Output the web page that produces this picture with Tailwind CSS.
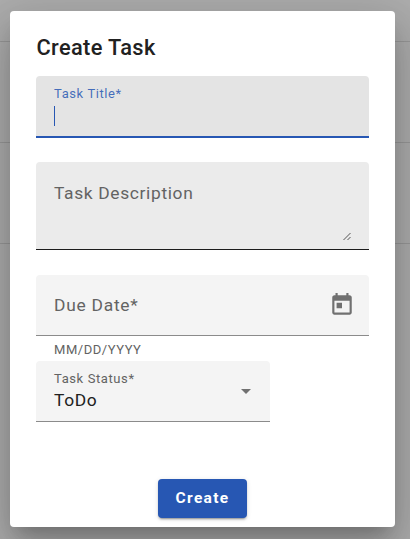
<!DOCTYPE html>
<html lang="en">
<head>
<meta charset="utf-8">
<title>Create Task</title>
<script src="https://cdn.jsdelivr.net/npm/@tailwindcss/browser@4"></script>
</head>
<body class="relative h-[539px] w-[410px] overflow-hidden bg-[#adadad] font-['Roboto',sans-serif] text-[#212121]">
<!-- Page rows behind the dialog -->
<div class="flex flex-col">
  <div class="h-[42px] border-b border-[#989898]"></div>
  <div class="h-[101px] border-b border-[#989898]"></div>
  <div class="h-[101px] border-b border-[#989898]"></div>
</div>
<main class="absolute top-[11px] left-[10px] flex h-[516px] w-[385px] flex-col rounded-[4px] bg-white px-[26px] pt-[21px] pb-[9px] shadow-[0_12px_16px_-8px_rgba(0,0,0,0.2),0_26px_41px_3px_rgba(0,0,0,0.14),0_10px_50px_9px_rgba(0,0,0,0.12)]">
  <h1 class="h-[44px] pl-[0.5px] text-[21.8px] leading-[32px] font-medium tracking-[0.36px]">Create Task</h1>

  <div class="flex h-[62px] flex-col rounded-t-[4px] border-b-2 border-[#2757b3] bg-[#e4e4e4] px-[18px] pt-[9px]">
    <label class="text-[13px] leading-[18px] tracking-[0.6px] text-[#2757b3]/85">Task Title*</label>
    <span class="mt-[3px] h-[20px] w-px bg-[#2757b3]"></span>
  </div>

  <div class="mt-[24px] flex h-[88px] flex-col rounded-t-[4px] border-b border-[#1c1c1c] bg-[#ebebeb] px-[18px] pt-[19px]">
    <label class="text-[17.4px] leading-[24px] tracking-[0.65px] text-[#636363]">Task Description</label>
    <svg class="mt-auto mb-[8px] ml-auto h-[9px] w-[8px]" viewBox="0 0 8 9" fill="none" stroke="#555" stroke-width="1"><path d="M.5 8 7.5 1M4.5 8 7.5 5"/></svg>
  </div>

  <div class="mt-[25px] flex h-[61px] items-center justify-between rounded-t-[4px] border-b border-[#8b8b8b] bg-[#f4f4f4] pr-[14px] pl-[18px]">
    <label class="text-[17.4px] leading-[24px] tracking-[0.75px] text-[#636363]">Due Date*</label>
    <svg class="h-[26px] w-[26px]" viewBox="0 0 24 24" fill="#707070"><path d="M19 3h-1V1h-2v2H8V1H6v2H5c-1.110 0-1.990.9-1.990 2L3 19c0 1.100.89 2 2 2h14c1.100 0 2-.9 2-2V5c0-1.100-.9-2-2-2zm0 16H5V8h14v11zM7 10h5v5H7z"/></svg>
  </div>
  <p class="h-[25px] pt-[5px] pl-[18px] text-[13px] leading-[18px] tracking-[0.54px] text-[#636363]">MM/DD/YYYY</p>

  <div class="flex h-[61px] w-[234px] items-center justify-between rounded-t-[4px] border-b border-[#8b8b8b] bg-[#f4f4f4] pr-[19px] pl-[18px]">
    <div class="flex flex-col">
      <label class="text-[13px] leading-[18px] tracking-[0.6px] text-[#636363]">Task Status*</label>
      <span class="text-[17.4px] leading-[24px] tracking-[0.6px]">ToDo</span>
    </div>
    <svg class="h-[5px] w-[10px]" viewBox="0 0 10 5" fill="#707070"><path d="M0 0h10L5 5z"/></svg>
  </div>

  <button class="mt-auto flex h-[39px] w-[89px] items-center justify-center self-center rounded-[4px] bg-[#2757b3] text-[15.5px] font-bold tracking-[1.3px] text-white shadow-[0_3px_1px_-2px_rgba(0,0,0,0.2),0_2px_2px_0_rgba(0,0,0,0.14),0_1px_5px_0_rgba(0,0,0,0.12)]">Create</button>
</main>
</body>
</html>
